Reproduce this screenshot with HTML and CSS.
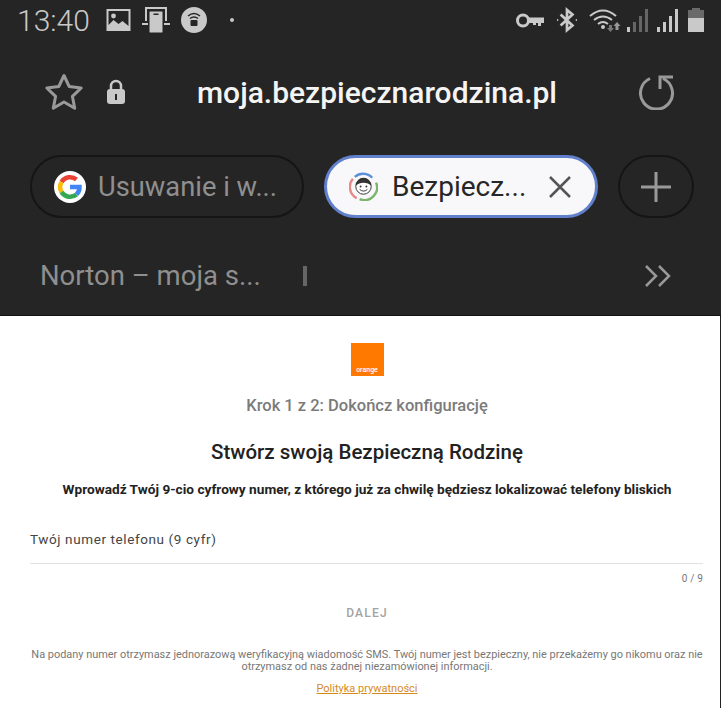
FILE: index.html
```html
<!DOCTYPE html>
<html lang="pl">
<head>
    <meta charset="UTF-8">
    <title>Bezpieczna Rodzina</title>
    <link rel="stylesheet" href="styles.css">
</head>
<body>
    <div class="browser">
        <div class="status-bar">
            <span class="clock">13:40</span>
            <svg class="status-icon" width="25" height="22" viewBox="0 0 24 22"><path fill="#c9c9c9" fill-rule="evenodd" d="M0 0h24v22H0zM2 2v14l5-5 5 4 4-3 6 5V2z"/><circle cx="7" cy="7" r="2.400" fill="#c9c9c9"/></svg>
            <svg class="status-icon" width="28" height="26" viewBox="0 0 28 26"><path fill="none" stroke="#c9c9c9" stroke-width="2" d="M4 14V1h20v13"/><path fill="#c9c9c9" d="M0 16h6v2H0zM22 16h6v2h-6z"/><rect x="7" y="4" width="14" height="22" rx="1" stroke="#252525" fill="#c9c9c9"/><rect x="11.500" y="6.500" width="5" height="1.500" fill="#252525"/></svg>
            <svg class="status-icon" width="26" height="26" viewBox="0 0 26 26"><circle cx="13" cy="13" r="13" fill="#c9c9c9"/><path fill="none" stroke="#252525" stroke-width="1.500" d="M7 9q6-5 12 0M9 11.500q4-3 8 0"/><rect x="9.500" y="13" width="7" height="6" rx="1" fill="#252525"/></svg>
            <span class="status-dot"></span>
            <span class="status-right">
                <svg class="icon-key" width="28" height="15" viewBox="0 0 28 15"><circle cx="7" cy="7.500" r="5.500" fill="none" stroke="#c9c9c9" stroke-width="3"/><path fill="#c9c9c9" d="M13 4.500h15v5.500h-3v3h-3v-3h-2v2h-3v-2h-4z"/></svg>
                <svg class="icon-bt" width="20" height="26" viewBox="0 0 22 26"><path fill="none" stroke="#c9c9c9" stroke-width="3" d="M4 7l13 12-6 5V2l6 5L4 19"/><path fill="#c9c9c9" d="M0 11.500l2 1.500-2 1.500zM22 11.500l-2 1.500 2 1.500z"/></svg>
                <svg class="icon-wifi" width="32" height="24" viewBox="0 0 32 24"><path fill="none" stroke="#c9c9c9" stroke-width="2" d="M1 8q13-11 26 0M5 12q9-7 18 0M9 16q5-4 10 0"/><circle cx="14" cy="19" r="2" fill="#c9c9c9"/><path fill="#777" d="M20 17h3v3h2l-3.500 4-3.500-4h2z"/><path fill="#999" d="M28 14l3.500 4h-2v4h-3v-4h-2z"/></svg>
                <svg width="21" height="24" viewBox="0 0 21 24"><rect y="19" width="3" height="5" fill="#c9c9c9"/><rect x="6" y="14" width="3" height="10" fill="#666"/><rect x="12" y="8" width="3" height="16" fill="#666"/><rect x="18" y="1" width="3" height="23" fill="#666"/></svg>
                <svg class="icon-signal" width="21" height="24" viewBox="0 0 21 24"><rect y="19" width="3" height="5" fill="#c9c9c9"/><rect x="6" y="14" width="3" height="10" fill="#c9c9c9"/><rect x="12" y="8" width="3" height="16" fill="#c9c9c9"/><rect x="18" y="1" width="3" height="23" fill="#c9c9c9"/></svg>
                <svg width="16" height="24" viewBox="0 0 16 24"><path fill="#6a6a6a" d="M4 0h8v2h4v8H0V2h4z"/><rect y="10" width="16" height="14" fill="#c9c9c9"/></svg>
            </span>
        </div>

        <div class="address-bar">
            <svg class="star" width="40" height="38" viewBox="0 0 40 38"><path fill="none" stroke="#999" stroke-width="3" stroke-linejoin="round" d="M20 2.500l5.200 11 12 1.500-8.800 8.300 2.300 12L20 29l-10.700 6.300 2.300-12L2.800 15l12-1.500z"/></svg>
            <svg class="lock" width="20" height="26" viewBox="0 0 20 26"><path fill="none" stroke="#c9c9c9" stroke-width="2.500" d="M5 11V7a5 5 0 0 1 10 0v4"/><rect x="1" y="10" width="18" height="15" rx="3" fill="#c9c9c9"/><rect x="9" y="15" width="2" height="6" fill="#252525"/></svg>
            <span class="url">moja.bezpiecznarodzina.pl</span>
            <svg class="reload" width="36" height="36" viewBox="0 0 36 36"><path fill="none" stroke="#999" stroke-width="3" d="M11 4.500a16 16 0 1 0 13 0"/><path fill="none" stroke="#999" stroke-width="3" d="M21 15V3h13"/></svg>
        </div>

        <div class="tabs">
            <div class="tab">
                <svg class="favicon" width="32" height="32" viewBox="0 0 32 32">
                    <circle cx="16" cy="16" r="16" fill="#fff"/>
                    <path fill="none" stroke="#ea4335" stroke-width="4.500" d="M7.500 11a10 10 0 0 1 15-2.500"/>
                    <path fill="none" stroke="#fbbc05" stroke-width="4.500" d="M7.500 11a10 10 0 0 0 0 10"/>
                    <path fill="none" stroke="#34a853" stroke-width="4.500" d="M7.500 21a10 10 0 0 0 15 2.500"/>
                    <path fill="none" stroke="#4285f4" stroke-width="4.500" d="M22.500 23.500a10 10 0 0 0 3-7.500H16"/>
                </svg>
                <span class="tab-title">Usuwanie i w...</span>
            </div>
            <div class="tab active">
                <svg class="favicon" width="29" height="29" viewBox="0 0 30 30">
                    <path fill="none" stroke="#5b8fd6" stroke-width="2.500" d="M6 5a13 13 0 0 1 18 1"/>
                    <path fill="none" stroke="#e58a86" stroke-width="2.500" d="M4 7a13 13 0 0 0 4 20"/>
                    <path fill="none" stroke="#7cb46b" stroke-width="2.500" d="M11 28a13 13 0 0 0 17-17"/>
                    <circle cx="15" cy="15" r="8" fill="#fff" stroke="#333"/>
                    <path fill="#333" d="M7 14a8 8 0 0 1 16 0q-3-3-8-3t-8 3z"/>
                    <circle cx="12" cy="15" r="1" fill="#333"/>
                    <circle cx="18" cy="15" r="1" fill="#333"/>
                    <path fill="none" stroke="#333" d="M11 18q4 3.500 8 0"/>
                </svg>
                <span class="tab-title">Bezpiecz...</span>
                <svg class="tab-close" width="22" height="22" viewBox="0 0 22 22"><path stroke="#555" stroke-width="2.500" d="M1 1l20 20M21 1L1 21"/></svg>
            </div>
            <div class="tab new-tab">
                <svg width="32" height="32" viewBox="0 0 32 32"><path stroke="#999" stroke-width="3" d="M16 1v30M1 16h30"/></svg>
            </div>
        </div>

        <div class="bookmarks">
            <span class="bookmark">Norton – moja s...</span>
            <span class="divider"></span>
            <svg class="more" width="26" height="22" viewBox="0 0 26 22"><path fill="none" stroke="#999" stroke-width="2.500" d="M1 1l10 10L1 21M14 1l10 10-10 10"/></svg>
        </div>
    </div>

    <div class="page">
        <div class="logo"><span>orange</span></div>
        <div class="step">Krok 1 z 2: Dokończ konfigurację</div>
        <h1 class="title">Stwórz swoją Bezpieczną Rodzinę</h1>
        <p class="intro">Wprowadź Twój 9-cio cyfrowy numer, z którego już za chwilę będziesz lokalizować telefony bliskich</p>
        <div class="field">Twój numer telefonu (9 cyfr)</div>
        <div class="counter">0 / 9</div>
        <div class="next">DALEJ</div>
        <p class="legal">Na podany numer otrzymasz jednorazową weryfikacyjną wiadomość SMS. Twój numer jest bezpieczny, nie przekażemy go nikomu oraz nie otrzymasz od nas żadnej niezamówionej informacji.</p>
        <a class="privacy" href="#">Polityka prywatności</a>
    </div>
</body>
</html>
```

FILE: styles.css
```css
:root {
    --bar-bg: #252525;
    --icon: #c9c9c9;
    --tab-border: #151515;
    --muted: #8f8f8f;
}

html, body {
    height: 100%;
}

body {
    margin: 0;
    font-family: Roboto, sans-serif;
    background-color: #fff;
    overflow: hidden;
}

.browser {
    background-color: var(--bar-bg);
    height: 315px;
    border-bottom: 1px solid #111;
}

.status-bar {
    height: 40px;
    display: flex;
    align-items: center;
    padding: 0 17px;
}

.clock {
    color: var(--icon);
    font-size: 30px;
    font-weight: 300;
    width: 89px;
    flex: none;
}

.status-icon {
    flex: none;
    margin-right: 11px;
}

.status-dot {
    width: 4px;
    height: 4px;
    border-radius: 50%;
    background-color: var(--icon);
    margin-left: 12px;
}

.status-right {
    margin-left: auto;
    display: flex;
    align-items: center;
    gap: 9px;
}

.icon-key {
    margin-right: 4px;
}

.icon-bt {
    margin-right: 3px;
}

.icon-wifi {
    margin-right: -3px;
}

.icon-signal {
    margin-right: 1px;
}

.address-bar {
    height: 104px;
    display: flex;
    align-items: center;
    padding: 0 46px 0 44px;
}

.star {
    flex: none;
}

.lock {
    flex: none;
    margin-left: 22px;
}

.url {
    flex: 1;
    text-align: center;
    color: #f4f4f4;
    font-size: 30px;
    font-weight: 500;
    white-space: nowrap;
    margin-right: 11px;
}

.reload {
    flex: none;
}

.tabs {
    display: flex;
    gap: 20px;
    padding: 11px 0 0 30px;
}

.tab {
    box-sizing: border-box;
    width: 274px;
    height: 63px;
    border: 2px solid var(--tab-border);
    border-radius: 32px;
    display: flex;
    align-items: center;
    padding: 0 20px 0 22px;
    gap: 12px;
}

.favicon {
    flex: none;
}

.tab-title {
    color: var(--muted);
    font-size: 27.300px;
    white-space: nowrap;
    flex: 1;
}

.tab.active {
    background-color: #f8f8fa;
    border: 3px solid #6180cc;
    padding-left: 22px;
    gap: 14px;
}

.tab.active .tab-title {
    color: #262626;
    font-size: 28px;
}

.tab-close {
    flex: none;
    margin-right: 4px;
}

.new-tab {
    width: 76px;
    justify-content: center;
    padding: 0;
}

.bookmarks {
    display: flex;
    align-items: center;
    padding: 41px 50px 0 40px;
}

.bookmark {
    color: var(--muted);
    font-size: 27.500px;
    white-space: nowrap;
}

.divider {
    width: 4px;
    height: 20px;
    background-color: #666;
    margin-left: 42px;
}

.more {
    margin-left: auto;
}

.page {
    box-sizing: border-box;
    height: 392px;
    border-right: 1px solid #222;
    padding: 27px 17px 0 31px;
    text-align: center;
}

.logo {
    box-sizing: border-box;
    width: 33px;
    height: 33px;
    margin: 0 auto;
    background-color: #ff7900;
    color: #fff;
    display: flex;
    align-items: flex-end;
    justify-content: center;
    font-size: 7px;
    font-weight: 500;
    line-height: 9px;
    padding-bottom: 1px;
}

.step {
    margin-top: 20px;
    color: #7b7b7b;
    font-size: 16.500px;
    font-weight: 500;
    line-height: 19px;
}

.title {
    margin: 25px 0 0;
    color: #222;
    font-size: 20.500px;
    font-weight: 500;
    line-height: 24px;
}

.intro {
    margin: 17px 0 0;
    color: #222;
    font-size: 13.650px;
    font-weight: 700;
    line-height: 16px;
    white-space: nowrap;
}

.field {
    margin: 34px 0 0 -1px;
    padding-bottom: 16px;
    border-bottom: 1px solid #e2e2e2;
    color: #444;
    font-size: 13.500px;
    line-height: 16px;
    letter-spacing: 0.600px;
    text-align: left;
}

.counter {
    margin-top: 9px;
    color: #777;
    font-size: 10px;
    line-height: 12px;
    letter-spacing: 0.200px;
    text-align: right;
}

.next {
    margin-top: 21px;
    color: #a3a3a3;
    font-size: 12px;
    font-weight: 500;
    line-height: 14px;
    letter-spacing: 1.200px;
}

.legal {
    margin: 29px 0 0;
    color: #777;
    font-size: 10.930px;
    line-height: 12px;
}

.privacy {
    display: inline-block;
    margin-top: 10px;
    color: #d68a1e;
    font-size: 11px;
    line-height: 12px;
}
```
